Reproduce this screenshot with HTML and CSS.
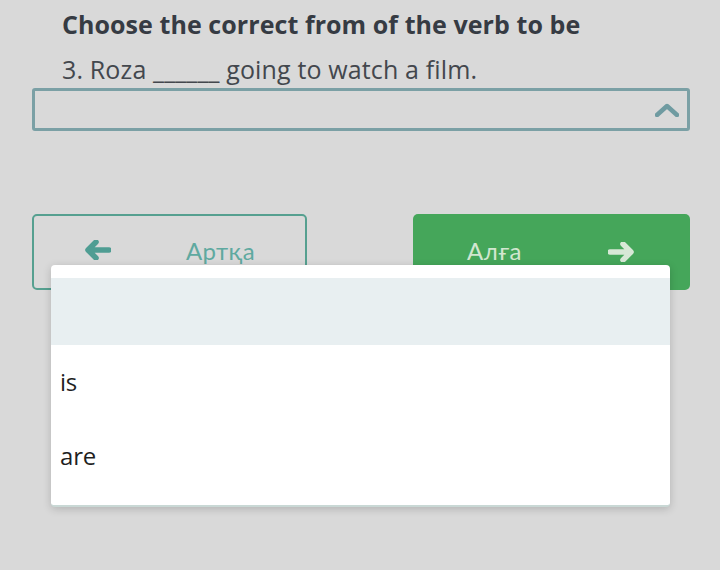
FILE: index.html
```html
<!DOCTYPE html>
<html>
<head>
<meta charset="utf-8">
<link rel="stylesheet" href="styles.css">
</head>
<body>
<div class="page">
  <h1 class="title">Choose the correct from of the verb to be</h1>
  <p class="question">3. Roza ______ going to watch a film.</p>
  <div class="select">
    <svg class="chevron" width="24" height="14" viewBox="0 0 24 14"><path d="M2 12 L12 3 L22 12" fill="none" stroke="#6f9ba1" stroke-width="4.5" stroke-linecap="round" stroke-linejoin="round"/></svg>
  </div>
  <div class="nav">
    <button class="btn back">
      <svg class="arrow" width="26" height="20" viewBox="0 0 26 20"><path d="M11 2 L3 10 L11 18 M3.5 10 L24 10" fill="none" stroke="#4f9d93" stroke-width="5.5" stroke-linecap="round" stroke-linejoin="round"/></svg>
      <span class="label">Артқа</span>
    </button>
    <button class="btn next">
      <span class="label">Алға</span>
      <svg class="arrow" width="26" height="20" viewBox="0 0 26 20"><path d="M15 2 L23 10 L15 18 M22.5 10 L2 10" fill="none" stroke="#d7e8d6" stroke-width="5.5" stroke-linecap="round" stroke-linejoin="round"/></svg>
    </button>
  </div>
  <ul class="menu">
    <li class="option active"></li>
    <li class="option">is</li>
    <li class="option">are</li>
  </ul>
</div>
</body>
</html>
```
FILE: styles.css
```css
html, body {
  margin: 0;
  padding: 0;
  background: #d9d9d9;
  width: 720px;
  height: 570px;
  overflow: hidden;
}
.page {
  position: relative;
  padding: 0 30px 0 32px;
  font-family: "Open Sans", "Noto Sans", sans-serif;
}
.title {
  margin: 0;
  padding: 7px 0 0 30px;
  font-size: 25px;
  line-height: 34px;
  font-weight: 700;
  color: #363b43;
  letter-spacing: 0.07px;
  white-space: nowrap;
}
.question {
  margin: 0;
  padding: 10px 0 0 30px;
  font-size: 25px;
  line-height: 36px;
  color: #43474d;
  letter-spacing: 0.14px;
  white-space: nowrap;
}
.select {
  margin-top: 1px;
  height: 37px;
  border: 3px solid #7ba0a5;
  border-radius: 3px;
  display: flex;
  align-items: center;
  justify-content: flex-end;
  padding-right: 8px;
}
.chevron { margin-top: 1px; }
.nav {
  margin-top: 83px;
  display: flex;
  justify-content: space-between;
}
.btn {
  height: 76px;
  border-radius: 5px;
  display: flex;
  align-items: center;
  font-family: "Lato", "Open Sans", sans-serif;
  font-size: 24px;
  padding: 0;
  box-sizing: border-box;
}
.back {
  width: 275px;
  background: transparent;
  border: 2px solid #56a090;
  color: #5fa9a0;
  padding-left: 51px;
  padding-bottom: 4px;
}
.back .label { margin-left: 75px; letter-spacing: 0.4px; }
.next {
  width: 277px;
  background: #45a65a;
  border: none;
  color: #d2e6d0;
  padding-left: 54px;
  padding-bottom: 4px;
}
.next .label { margin-right: 86px; letter-spacing: 0.4px; }
.next .arrow { margin-top: 4px; }
.menu {
  position: absolute;
  left: 51px;
  top: 265px;
  width: 619px;
  height: 242px;
  margin: 0;
  padding: 13px 0 14px;
  box-sizing: border-box;
  list-style: none;
  background: #ffffff;
  border-radius: 4px;
  border-bottom: 2px solid #c9d8d5;
  box-shadow: 0 2px 8px rgba(0,0,0,0.18);
}
.option {
  height: 74px;
  display: flex;
  align-items: center;
  padding-left: 9px;
  padding-bottom: 2px;
  box-sizing: border-box;
  font-size: 24px;
  color: #1f1f1f;
  letter-spacing: -0.2px;
}
.option.active {
  height: 67px;
  background: #e8eff1;
}
```
